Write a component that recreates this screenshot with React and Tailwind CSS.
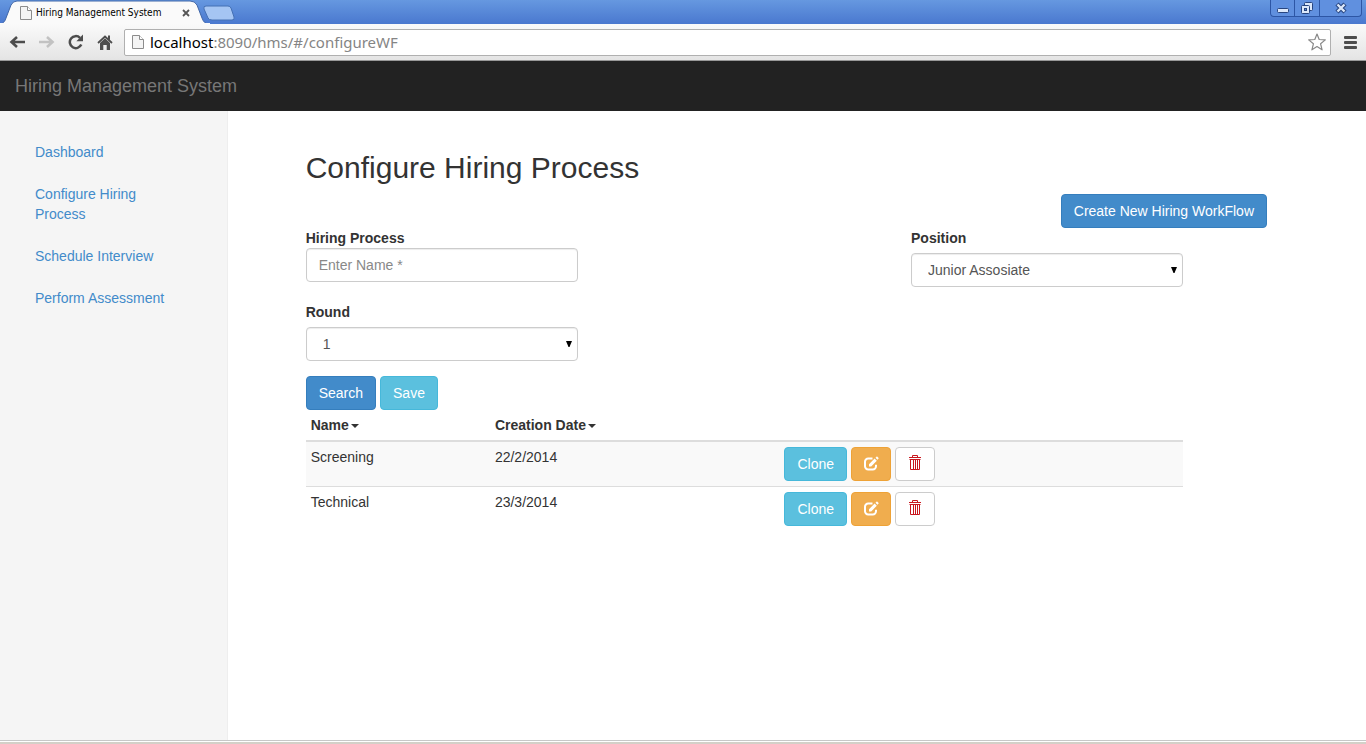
import React from "react";

const rows = [
  { name: "Screening", date: "22/2/2014" },
  { name: "Technical", date: "23/3/2014" },
];

const links = ["Dashboard", "Configure Hiring Process", "Schedule Interview", "Perform Assessment"];

function PageIcon({ className }) {
  return (
    <svg className={className} viewBox="0 0 12 14" fill="#f4f4f4" stroke="#8c8c8c" aria-hidden="true">
      <path d="M.5 .5h7l4 4v9H.5z" />
      <path d="M7.5 .5v4h4" fill="#fff" />
    </svg>
  );
}

function EditIcon() {
  return (
    <svg className="h-4 w-4" viewBox="0 0 16 16" aria-hidden="true">
      <path d="M9.500 2.500H5.200A3.200 3.200 0 0 0 2 5.700v4.600A3.200 3.200 0 0 0 5.200 13.500h4.600A3.200 3.200 0 0 0 13 10.300V8.800" fill="none" stroke="#fff" strokeWidth="2" />
      <path d="M6 10.500V8.200L11.600 2.600l2.200 2.200L8.200 10.500zM12.500 1.800l1-1c.3-.3.6-.3.900 0l1 1c.3.300.3.600 0 .9l-1 1z" fill="#fff" />
    </svg>
  );
}

function TrashIcon() {
  return (
    <svg className="-mt-0.5 h-4 w-3" viewBox="0 0 12 16" fill="none" stroke="#c9171e" aria-hidden="true">
      <path d="M0 2.500h12M3.500 2V.5h5V2M1.500 5v9.500h9V5M4.500 5v9M6.500 5v9M8.500 5v9" />
      <path d="M.5 4.500h11" />
    </svg>
  );
}

function Caret() {
  return (
    <svg className="ml-0.5 inline-block h-1 w-2 align-middle" viewBox="0 0 8 4" aria-hidden="true">
      <path d="M0 0h8L4 4z" fill="#333" />
    </svg>
  );
}

function Field({ id, label, children }) {
  return (
    <div className="flex w-[31%] flex-col">
      <label htmlFor={id} className="self-start font-bold">{label}</label>
      {children}
    </div>
  );
}

function Dropdown({ id, options }) {
  return (
    <div className="relative mt-[5px]">
      <select id={id} className="block h-[34px] w-full appearance-none rounded border border-[#ccc] bg-white pr-6 pl-4 text-[#555] shadow-[inset_0_1px_1px_rgba(0,0,0,0.075)]">
        {options.map((option) => <option key={option}>{option}</option>)}
      </select>
      <svg className="pointer-events-none absolute top-3.5 right-1.5 h-1.5 w-1.5" viewBox="0 0 6 6" aria-hidden="true">
        <path d="M0 0h6L3.500 6h-1z" fill="#000" />
      </svg>
    </div>
  );
}

function Button({ tone, children, ...rest }) {
  const tones = {
    primary: "px-3 bg-[#428bca] border-[#357ebd] text-white",
    info: "px-3 bg-[#5bc0de] border-[#46b8da] text-white",
    warning: "w-10 bg-[#f0ad4e] border-[#eea236] text-white",
    plain: "w-10 bg-white border-[#ccc]",
  };
  return (
    <button type="button" className={"flex h-[34px] items-center justify-center rounded border " + tones[tone]} {...rest}>
      {children}
    </button>
  );
}

function TabStrip() {
  return (
    <div className="relative flex h-6 items-start justify-between bg-linear-to-b from-[#6698e0] to-[#4a78cf]">
      <svg className="absolute top-0 left-0 h-6 w-60" viewBox="0 0 240 24" aria-hidden="true">
        <path d="M0 24C4 23 5 21 6 18L11 5Q13 1 17 1H190Q195 1 197 5L202 18Q204 24 209 24z" fill="#fafafa" stroke="#3f66a8" strokeWidth="1" />
        <path d="M0 24h210" stroke="#fafafa" strokeWidth="2" />
        <path d="M206 6H228Q230 6 231 8L234 17Q235 20 232 20H212Q209 20 208 18L204 9Q203 6 206 6z" fill="#a5c5f3" stroke="#4470b4" />
      </svg>
      <div className="relative flex h-6 w-[194px] items-center pt-0.5 pl-5">
        <PageIcon className="h-3.5 w-3 shrink-0" />
        <span className="ml-1 flex-1 whitespace-nowrap font-['DejaVu_Sans_Condensed','DejaVu_Sans',sans-serif] text-[10px] text-black">Hiring Management System</span>
        <button type="button" aria-label="Close tab" className="flex h-4 w-4 items-center justify-center">
          <svg className="h-2 w-2" viewBox="0 0 8 8" stroke="#555" strokeWidth="1.800" aria-hidden="true"><path d="M1 1l6 6M7 1L1 7" /></svg>
        </button>
      </div>
      <div className="mr-1 flex h-[17px] rounded-b border border-t-0 border-[#2d56a5] bg-[#6090df]">
        <button type="button" aria-label="Minimize" className="flex w-6 items-center justify-center border-r border-[#2d56a5]">
          <svg className="h-3 w-3" viewBox="0 0 12 12" aria-hidden="true"><rect x=".5" y="6.500" width="11" height="4" rx="1" fill="#dce8fa" stroke="#28457f" /></svg>
        </button>
        <button type="button" aria-label="Restore" className="flex w-[25px] items-center justify-center border-r border-[#2d56a5]">
          <svg className="h-3 w-3" viewBox="0 0 12 12" fill="#dce8fa" stroke="#28457f" aria-hidden="true">
            <rect x="3.500" y=".5" width="8" height="8" rx="1" /><rect x=".5" y="3.500" width="8" height="8" rx="1" /><rect x="3.500" y="6.500" width="2" height="2" fill="#6090df" />
          </svg>
        </button>
        <button type="button" aria-label="Close window" className="flex w-[41px] items-center justify-center">
          <svg className="h-3 w-3" viewBox="0 0 12 12" aria-hidden="true">
            <path d="M2 2l8 8M10 2l-8 8" stroke="#28457f" strokeWidth="4.500" /><path d="M2.500 2.500l7 7M9.500 2.500l-7 7" stroke="#dce8fa" strokeWidth="2.400" />
          </svg>
        </button>
      </div>
    </div>
  );
}

function Toolbar() {
  return (
    <div className="flex h-[37px] items-center border-b border-[#999] bg-linear-to-b from-[#fafafa] to-[#e4e4e4] pr-[7px] pl-[9px]">
      <button type="button" aria-label="Back" className="w-4">
        <svg className="h-4 w-4" viewBox="0 0 16 16" fill="none" stroke="#4d4d4d" strokeWidth="2.600" aria-hidden="true"><path d="M2 8h14M8 3L2.500 8l5.500 5" /></svg>
      </button>
      <button type="button" aria-label="Forward" className="ml-3.5 w-4">
        <svg className="h-4 w-4" viewBox="0 0 16 16" fill="none" stroke="#c2c2c2" strokeWidth="2.600" aria-hidden="true"><path d="M0 8h14M8 3l5.500 5L8 13" /></svg>
      </button>
      <button type="button" aria-label="Reload" className="ml-[13px] w-4">
        <svg className="h-4 w-4" viewBox="0 0 16 16" aria-hidden="true">
          <path d="M13.300 10.600A6 6 0 1 1 12 3.800" fill="none" stroke="#4d4d4d" strokeWidth="2.500" /><path d="M15 .6v6.600H8.400z" fill="#4d4d4d" />
        </svg>
      </button>
      <button type="button" aria-label="Home" className="ml-[13px] w-4">
        <svg className="h-4 w-4" viewBox="0 0 16 16" aria-hidden="true">
          <path d="M8 4.300l5 4.700V16H9.700v-5H6.300v5H3V9z" fill="#4d4d4d" /><path d="M1 9L8 2.500 15 9" fill="none" stroke="#4d4d4d" strokeWidth="1.800" /><path d="M11 1.500h2v5l-2-2z" fill="#4d4d4d" />
        </svg>
      </button>
      <div className="ml-[11px] flex h-[27px] flex-1 items-center rounded-xs border border-[#b0b0b0] bg-white pr-1 pl-[7px]">
        <PageIcon className="h-4 w-3 shrink-0" />
        <div className="ml-1.5 flex-1 font-['Noto_Sans',sans-serif] text-[15px] leading-6 text-[#858585]"><span className="text-black">localhost</span>:8090/hms/#/configureWF</div>
        <button type="button" aria-label="Bookmark this page">
          <svg className="h-[18px] w-[18px]" viewBox="0 0 18 18" fill="#fff" stroke="#888" strokeWidth="1.200" strokeLinejoin="round" aria-hidden="true"><path d="M9 1l2.200 5.500 6.100.4-4.700 3.900 1.500 6L9 13.500l-5.100 3.300 1.500-6L.7 6.900l6.100-.4z" /></svg>
        </button>
      </div>
      <button type="button" aria-label="Menu" className="ml-3 w-4">
        <svg className="h-4 w-4" viewBox="0 0 16 16" fill="#4d4d4d" aria-hidden="true"><rect x="1" y="2" width="13" height="3" rx="1" /><rect x="1" y="7" width="13" height="3" rx="1" /><rect x="1" y="12" width="13" height="3" rx="1" /></svg>
      </button>
    </div>
  );
}

export default function App() {
  return (
    <div className="flex min-h-screen flex-col bg-white font-['Liberation_Sans',Arial,sans-serif] text-sm leading-5 text-[#333]">
      <TabStrip />
      <Toolbar />
      <header className="flex h-[50px] items-center bg-[#222] px-[15px]">
        <a href="#/" className="text-lg leading-5 text-[#777]">Hiring Management System</a>
      </header>
      <div className="flex flex-1">
        <nav className="w-1/6 border-r border-[#eee] bg-[#f5f5f5] px-5 pt-[21px]">
          <ul>
            {links.map((link) => (
              <li key={link} className="mb-0.5">
                <a href="#/configureWF" className="block py-2.5 pr-10 pl-[15px] text-[#428bca]">{link}</a>
              </li>
            ))}
          </ul>
        </nav>
        <main className="flex-1 pt-10 pr-[99px] pl-[78px]">
          <h1 className="text-3xl leading-[33px]">Configure Hiring Process</h1>
          <div className="mt-2.5 flex justify-end">
            <Button tone="primary">Create New Hiring WorkFlow</Button>
          </div>
          <div className="mr-[84px]">
            <form>
              <div className="flex justify-between">
                <Field id="process" label="Hiring Process">
                  <input id="process" type="text" placeholder="Enter Name *" className="h-[34px] w-full rounded border border-[#ccc] px-3 shadow-[inset_0_1px_1px_rgba(0,0,0,0.075)] placeholder:text-[#888]" />
                </Field>
                <Field id="position" label="Position">
                  <Dropdown id="position" options={["Junior Assosiate", "Senior Assosiate"]} />
                </Field>
              </div>
              <div className="mt-[15px]">
                <Field id="round" label="Round">
                  <Dropdown id="round" options={["1", "2", "3"]} />
                </Field>
              </div>
              <div className="mt-[15px] flex gap-1">
                <Button tone="primary">Search</Button>
                <Button tone="info">Save</Button>
              </div>
            </form>
            <table className="w-full table-fixed border-collapse text-left">
              <thead>
                <tr className="border-b-2 border-[#ddd]">
                  <th className="w-[21%] p-[5px]">Name<Caret /></th>
                  <th className="w-[33%] p-[5px]">Creation Date<Caret /></th>
                  <th className="p-[5px]" aria-label="Actions" />
                </tr>
              </thead>
              <tbody>
                {rows.map((row) => (
                  <tr key={row.name} className="border-[#ddd] align-top odd:bg-[#f9f9f9] even:border-t">
                    <td className="p-[5px]">{row.name}</td>
                    <td className="p-[5px]">{row.date}</td>
                    <td className="p-[5px]">
                      <div className="flex gap-1">
                        <Button tone="info">Clone</Button>
                        <Button tone="warning" aria-label="Edit"><EditIcon /></Button>
                        <Button tone="plain" aria-label="Delete"><TrashIcon /></Button>
                      </div>
                    </td>
                  </tr>
                ))}
              </tbody>
            </table>
          </div>
        </main>
      </div>
      <footer className="h-1 border-t border-b-2 border-t-[#c8c8c8] border-b-[#d4d0c8]" />
    </div>
  );
}
